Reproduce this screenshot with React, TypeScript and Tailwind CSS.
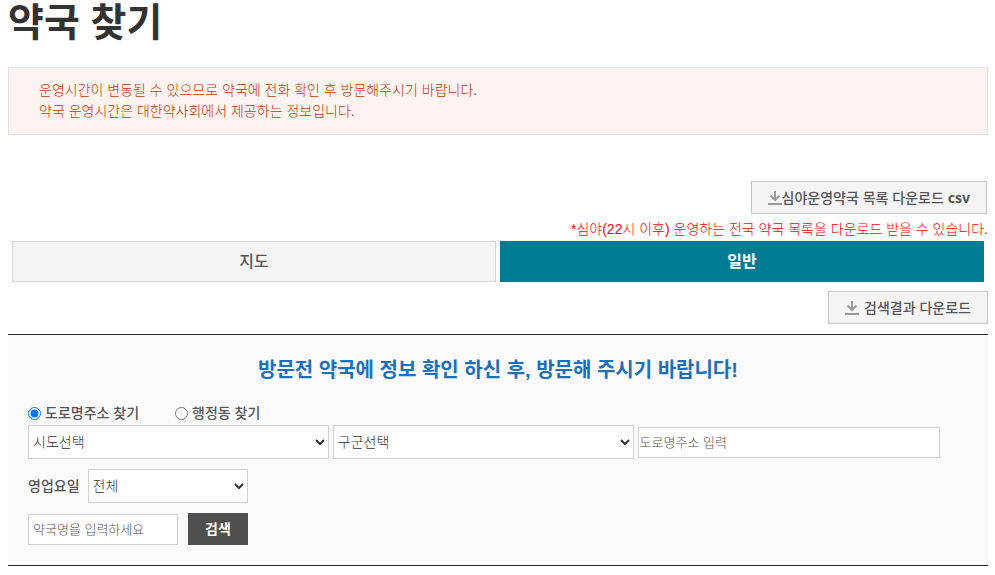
import { useState } from 'react'

type Tab = 'map' | 'list'
type AddressType = 'road' | 'dong'

const TABS: { id: Tab; label: string }[] = [
  { id: 'map', label: '지도' },
  { id: 'list', label: '일반' },
]

const ADDRESS_TYPES: { id: AddressType; label: string }[] = [
  { id: 'road', label: '도로명주소 찾기' },
  { id: 'dong', label: '행정동 찾기' },
]

const selectClass = 'h-[34px] border border-[#d0d0d0] bg-white text-sm font-light text-[#333]'
const inputClass =
  'h-[31px] border border-[#d0d0d0] bg-white text-[13px] font-light text-[#333] placeholder:text-[#555]'

function DownloadIcon() {
  return (
    <svg width="14" height="14" viewBox="0 0 14 14" fill="none" stroke="#999" strokeWidth="2">
      <path d="M7 0v9M2.5 4.5L7 9L11.5 4.5" />
      <path d="M0 13h14" />
    </svg>
  )
}

export default function App() {
  const [tab, setTab] = useState<Tab>('list')
  const [addressType, setAddressType] = useState<AddressType>('road')

  return (
    <main className="pr-[7px] pl-2 font-['Liberation_Sans','Noto_Sans_CJK_KR',sans-serif] text-sm text-[#555]">
      <h1 className="text-[39px] leading-[46px] font-bold text-[#333]">약국 찾기</h1>

      <div className="mt-[21px] border border-[#eadfdd] bg-[#fdf4f1] px-[30px] py-3 leading-[21px] font-light text-[#cc3300]">
        <p>운영시간이 변동될 수 있으므로 약국에 전화 확인 후 방문해주시기 바랍니다.</p>
        <p>약국 운영시간은 대한약사회에서 제공하는 정보입니다.</p>
      </div>

      {/* Late-night pharmacy list */}
      <div className="mt-[46px] flex flex-col items-end">
        <button
          type="button"
          className="mr-px flex h-[33px] items-center border border-[#c6c6c6] bg-[#f4f4f4] px-4 font-medium"
        >
          <DownloadIcon />
          <span>
            심야운영약국 목록 다운로드 <b className="font-['Noto_Sans',sans-serif]">csv</b>
          </span>
        </button>
        <p className="mt-1 leading-[23px] font-light text-[#ff0000]">
          *심야(22시 이후) 운영하는 전국 약국 목록을 다운로드 받을 수 있습니다.
        </p>
      </div>

      <div role="tablist" className="grid grid-cols-2 gap-1 px-1">
        {TABS.map((t) => (
          <button
            key={t.id}
            type="button"
            role="tab"
            aria-selected={tab === t.id}
            onClick={() => setTab(t.id)}
            className={`h-[41px] border text-base ${
              tab === t.id
                ? 'border-[#007b95] bg-[#007b95] font-bold text-white'
                : 'border-[#d5d5d5] bg-[#f4f4f4] font-medium text-[#555]'
            }`}
          >
            {t.label}
          </button>
        ))}
      </div>

      <div className="mt-[9px] flex justify-end">
        <button
          type="button"
          className="flex h-[33px] items-center gap-[5px] border border-[#c6c6c6] bg-[#f4f4f4] px-4 font-medium"
        >
          <DownloadIcon />
          <span>검색결과 다운로드</span>
        </button>
      </div>

      {/* Search form */}
      <form
        onSubmit={(e) => e.preventDefault()}
        className="mt-[10px] border-y border-[#2b2b2b] bg-[#fafafa] px-5 pt-[21px] pb-5"
      >
        <h2 className="text-center text-[20px] leading-[28px] font-bold text-[#1c6fbb]">
          방문전 약국에 정보 확인 하신 후, 방문해 주시기 바랍니다!
        </h2>

        <div className="mt-[17px] flex gap-9 leading-[24px] font-medium">
          {ADDRESS_TYPES.map((a) => (
            <label key={a.id} className="flex items-center gap-1">
              <input
                type="radio"
                name="addressType"
                checked={addressType === a.id}
                onChange={() => setAddressType(a.id)}
                className="h-[13px] w-[13px]"
              />
              {a.label}
            </label>
          ))}
        </div>

        <div className="flex items-center gap-1">
          <select aria-label="시도" className={`${selectClass} w-[32%]`}>
            <option>시도선택</option>
          </select>
          <select aria-label="구군" className={`${selectClass} w-[32%]`}>
            <option>구군선택</option>
          </select>
          <input
            type="text"
            aria-label="도로명주소"
            placeholder="도로명주소 입력"
            className={`${inputClass} w-[32.2%] px-px`}
          />
        </div>

        <div className="mt-[10px] flex items-center gap-2">
          <label htmlFor="openDay" className="font-medium">
            영업요일
          </label>
          <select id="openDay" className={`${selectClass} w-40`}>
            <option>전체</option>
          </select>
        </div>

        <div className="mt-[10px] flex items-end gap-[10px]">
          <input
            type="text"
            aria-label="약국명"
            placeholder="약국명을 입력하세요"
            className={`${inputClass} w-[150px] px-1`}
          />
          <button type="submit" className="h-8 w-[60px] bg-[#4f4f4f] font-bold text-white">
            검색
          </button>
        </div>
      </form>
    </main>
  )
}
